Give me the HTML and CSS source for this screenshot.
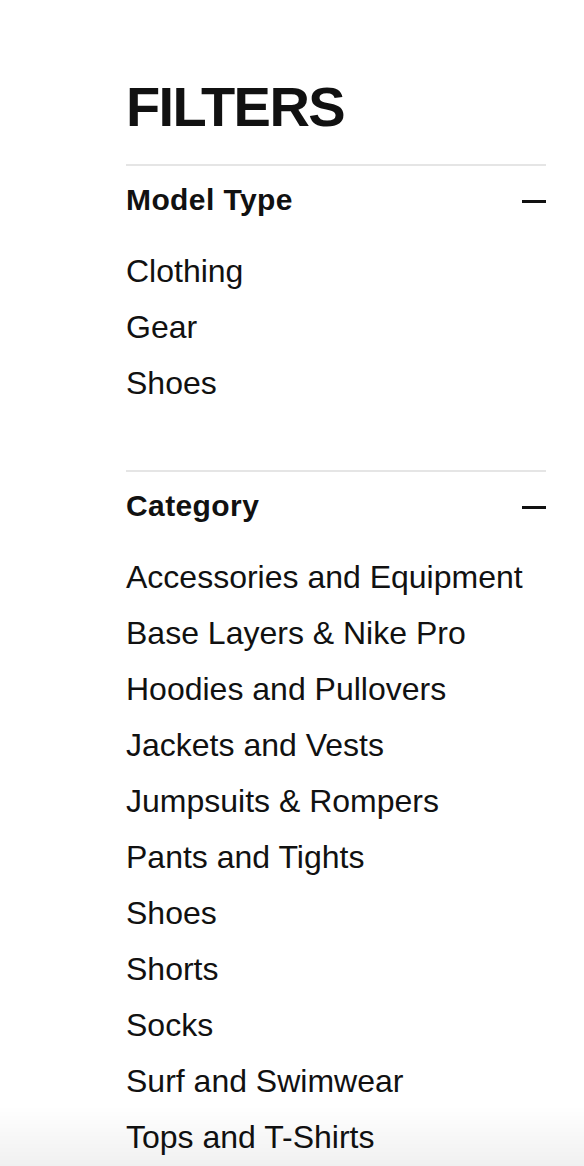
FILE: index.html
```html
<!DOCTYPE html>
<html lang="en">
<head>
<meta charset="utf-8">
<title>Filters</title>
<link rel="stylesheet" href="styles.css">
</head>
<body>
<div class="panel">
  <h1 class="title">FILTERS</h1>
  <section class="group">
    <div class="group-head">
      <span class="group-name">Model Type</span>
      <span class="minus" aria-hidden="true"></span>
    </div>
    <ul class="options">
      <li>Clothing</li>
      <li>Gear</li>
      <li>Shoes</li>
    </ul>
  </section>
  <section class="group">
    <div class="group-head">
      <span class="group-name">Category</span>
      <span class="minus" aria-hidden="true"></span>
    </div>
    <ul class="options">
      <li>Accessories and Equipment</li>
      <li>Base Layers &amp; Nike Pro</li>
      <li>Hoodies and Pullovers</li>
      <li>Jackets and Vests</li>
      <li>Jumpsuits &amp; Rompers</li>
      <li>Pants and Tights</li>
      <li>Shoes</li>
      <li>Shorts</li>
      <li>Socks</li>
      <li>Surf and Swimwear</li>
      <li>Tops and T-Shirts</li>
    </ul>
  </section>
</div>
<div class="fade"></div>
</body>
</html>
```
FILE: styles.css
```css
html, body {
  margin: 0;
  padding: 0;
  background: #fff;
  overflow: hidden;
  height: 1166px;
}
body {
  font-family: "Liberation Sans", Arial, Helvetica, sans-serif;
  color: #111;
}
.panel {
  margin-left: 126px;
  width: 420px;
  padding-top: 75px;
}
.title {
  margin: 0 0 25px 0;
  font-size: 56px;
  line-height: 64px;
  font-weight: 700;
  letter-spacing: -1.6px;
}
.group {
  border-top: 2px solid #e5e5e5;
  padding-bottom: 59px;
}
.group-head {
  height: 68px;
  padding-bottom: 2px;
  display: flex;
  align-items: center;
  justify-content: space-between;
}
.group-name {
  font-size: 30px;
  font-weight: 700;
  letter-spacing: 0.4px;
}
.minus {
  width: 24px;
  height: 3px;
  margin-top: 2px;
  background: #111;
}
.options {
  list-style: none;
  margin: 0;
  padding: 7px 0 0 0;
}
.options li {
  font-size: 32px;
  line-height: 56px;
  height: 56px;
}
.fade {
  position: fixed;
  left: 0;
  right: 0;
  bottom: 0;
  height: 60px;
  background: linear-gradient(to bottom, rgba(0,0,0,0), rgba(0,0,0,0.06));
  pointer-events: none;
}
```
